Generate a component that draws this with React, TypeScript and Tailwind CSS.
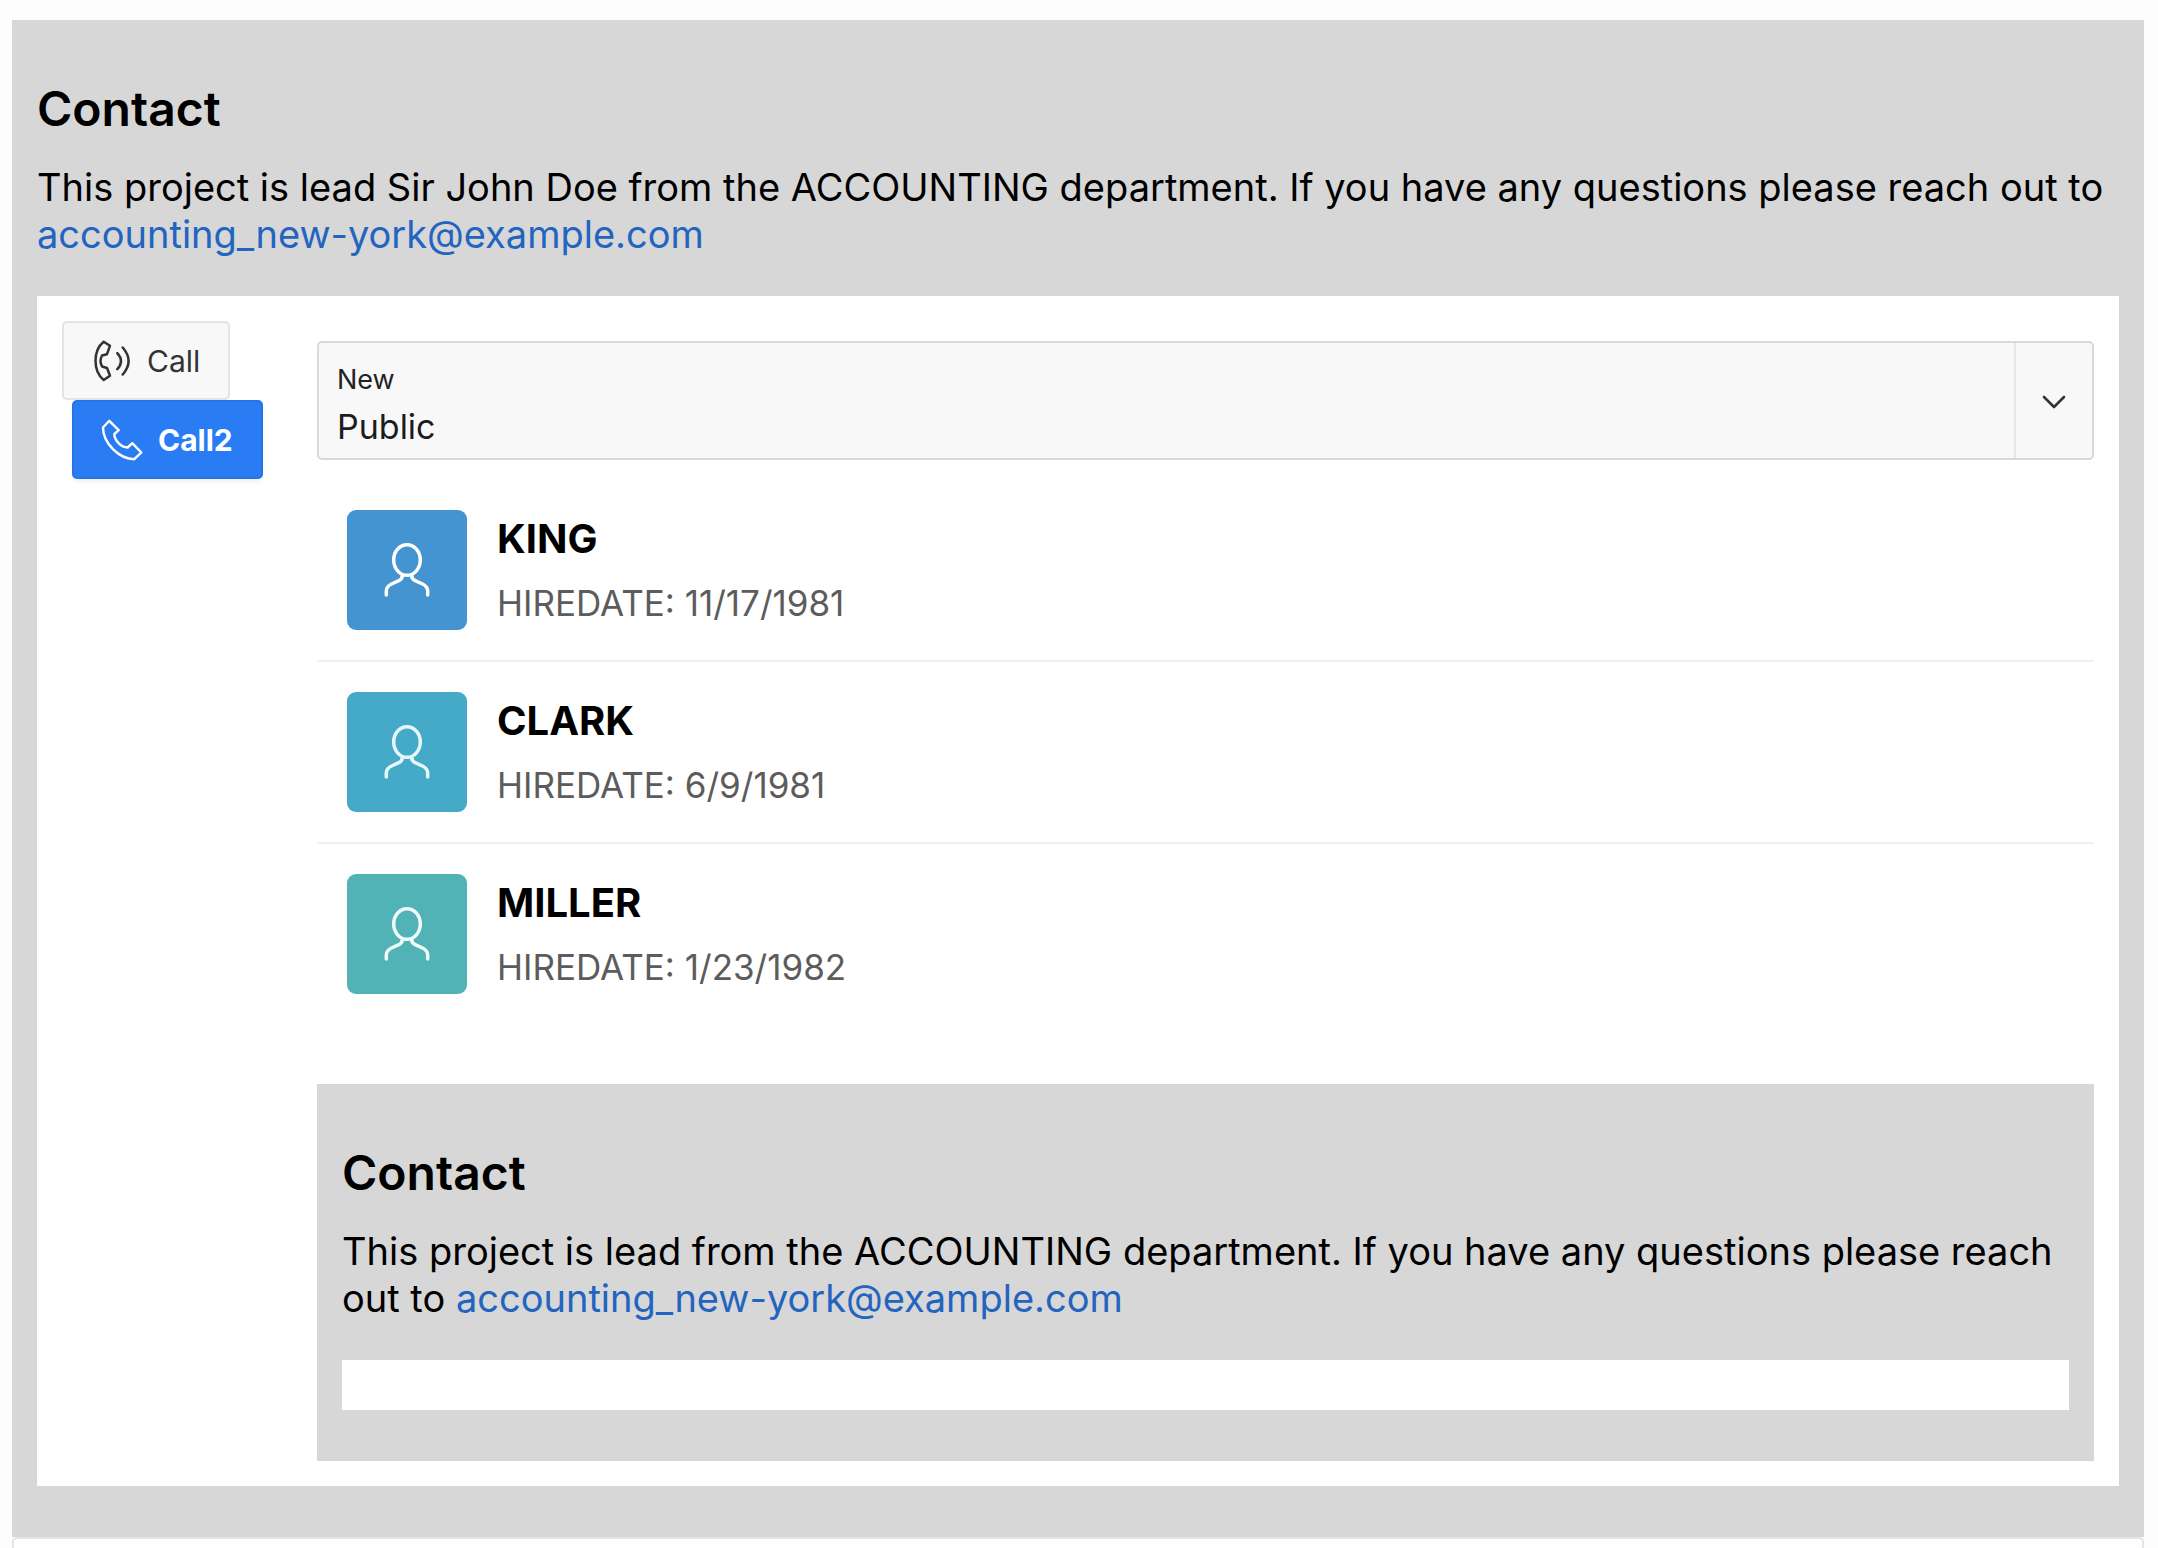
import { useId, type ReactNode } from 'react'

function CallWavesIcon() {
  return (
    <svg viewBox="0 0 40 44" className="h-11 w-10" fill="none" stroke="currentColor" strokeWidth="2.5" strokeLinecap="round" strokeLinejoin="round" aria-hidden="true">
      <path d="M11.700 2.700 L18 6.700 L15 15.200 L10 16.500 Q7 22 10 27.500 L15 29 L18 36.700 L11.700 41 C0.800 32.500 0.800 11.200 11.700 2.700Z" />
      <path d="M25.300 14.200 Q32.700 22.200 25.300 30.200M30.700 8.500 Q42.500 22 30.700 35.500" />
    </svg>
  )
}

function PhoneIcon() {
  return (
    <svg viewBox="0 0 44 44" className="h-11 w-11" fill="none" stroke="currentColor" strokeWidth="2.4" strokeLinecap="round" strokeLinejoin="round" aria-hidden="true">
      <path d="M9.300 2.800 L18.700 12.200 L14.300 16.200 C14.500 22.500 21 29 27.700 29.500 L32.300 25.200 L41.300 34.500 L34.300 41.200 C19 41 3 25 3 9.500Z" />
    </svg>
  )
}

function PersonIcon() {
  return (
    <svg viewBox="0 0 48 60" className="h-15 w-12" fill="none" stroke="currentColor" strokeWidth="3.5" strokeLinecap="round" aria-hidden="true">
      <ellipse cx="24" cy="20" rx="13.300" ry="15.300" />
      <path d="M19.300 35.500c0 2.500-1 4-3.500 5.200l-7.300 3.300c-3.500 1.700-5.200 3.500-5.200 7v4M28.700 35.500c0 2.500 1 4 3.500 5.200l7.300 3.300c3.500 1.700 5.200 3.500 5.200 7v4" />
    </svg>
  )
}

function ContactRegion({ lead, children }: { lead: string; children?: ReactNode }) {
  return (
    <section className="bg-[#d7d7d7] px-[25px] pt-[59px] pb-[51px]">
      <h2 className="text-[48px] leading-[60px] font-semibold">Contact</h2>
      <p className="mt-[25px] mb-[38px] text-[38px] leading-[47px]">
        {lead} from the ACCOUNTING department. If you have any questions please reach out to{' '}
        <a href="mailto:accounting_new-york@example.com" className="text-[#2264c0]">accounting_new-york@example.com</a>
      </p>
      <div className="bg-white p-[25px]">{children}</div>
    </section>
  )
}

const employees = [
  { name: 'KING', hired: '11/17/1981', tile: 'bg-[#4594d2] text-white' },
  { name: 'CLARK', hired: '6/9/1981', tile: 'bg-[#45aac8] text-[#e6f7fb]' },
  { name: 'MILLER', hired: '1/23/1982', tile: 'bg-[#52b3b6] text-[#f0fbfb]' },
]

function VisibilitySelect() {
  const id = useId()
  return (
    <div className="relative mt-[20px] h-[119px]">
      <label htmlFor={id} className="absolute top-[23px] left-[20px] text-[27px] leading-[32px] text-[#222]">New</label>
      <select id={id} defaultValue="Public" className="h-full w-full appearance-none rounded-[5px] border-2 border-[#d9d9d9] bg-[#f8f8f8] pt-[52px] pr-[90px] pl-[18px] text-[34px] leading-[44px] text-[#1c1c1c]">
        <option>Public</option>
        <option>Private</option>
      </select>
      <span className="pointer-events-none absolute inset-y-[2px] right-[2px] flex w-[78px] items-center justify-center border-l-2 border-[#e5e5e5] pt-[2px] text-[#333]">
        <svg viewBox="0 0 24 14" className="h-3.5 w-6" fill="none" stroke="currentColor" strokeWidth="2.6" strokeLinecap="round" strokeLinejoin="round" aria-hidden="true">
          <path d="M2 2l10 10L22 2" />
        </svg>
      </span>
    </div>
  )
}

export default function App() {
  return (
    <div className="min-h-screen bg-[#fdfdfd] pt-[20px] pr-[14px] pl-[12px] font-['Inter',sans-serif] text-black">
      <ContactRegion lead="This project is lead Sir John Doe">
        <div className="flex">
          <div className="flex w-[255px] shrink-0 flex-col items-start">
            <button type="button" className="flex h-[79px] items-center gap-[15px] rounded-[5px] border-2 border-[#e4e4e4] bg-[#f8f8f8] px-[28px] text-[30px] text-[#333]">
              <CallWavesIcon />
              <span className="pt-[2px]">Call</span>
            </button>
            <button type="button" className="ml-[10px] flex h-[79px] items-center gap-[14px] rounded-[5px] border-2 border-[#2673e6] bg-[#2a7cf5] pr-[28px] pl-[26px] text-[30px] font-bold text-white shadow-md shadow-black/5">
              <PhoneIcon />
              <span className="pt-[2px]">Call2</span>
            </button>
          </div>
          <div className="min-w-0 flex-1">
            <VisibilitySelect />
            <ul className="mt-[20px] mb-[60px] divide-y-2 divide-[#f0f0f0]">
              {employees.map((e) => (
                <li key={e.name} className="flex gap-[30px] p-[30px]">
                  <span className={`flex size-[120px] items-center justify-center rounded-[9px] ${e.tile}`}>
                    <PersonIcon />
                  </span>
                  <div>
                    <h3 className="mt-[4px] text-[40px] leading-[50px] font-bold">{e.name}</h3>
                    <p className="mt-[16px] text-[35px] leading-[46px] text-[#5c5c5c]">HIREDATE: {e.hired}</p>
                  </div>
                </li>
              ))}
            </ul>
            <ContactRegion lead="This project is lead" />
          </div>
        </div>
      </ContactRegion>
      <div className="h-[11px] rounded-t-[5px] border-2 border-b-0 border-[#e5e5e5] bg-white" />
    </div>
  )
}
